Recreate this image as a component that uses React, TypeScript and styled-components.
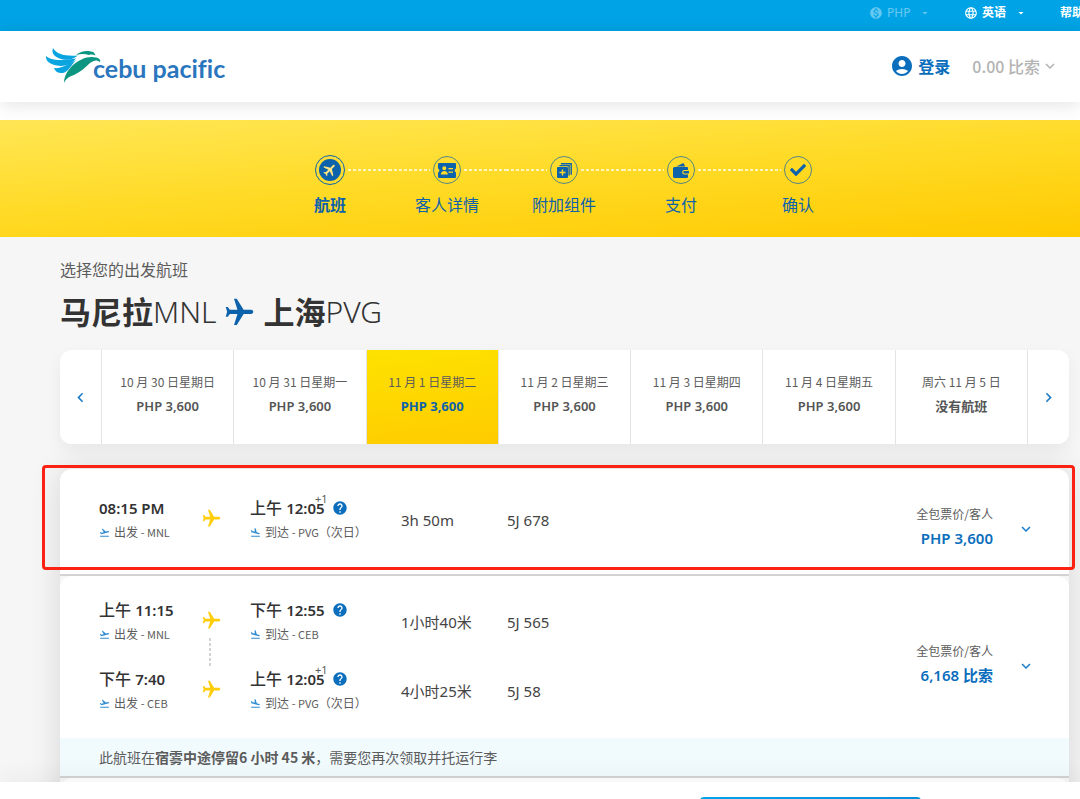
import React from 'react';
import styled, { createGlobalStyle, css } from 'styled-components';
import {
  MdAccountCircle,
  MdArrowDropDown,
  MdChevronLeft,
  MdChevronRight,
  MdExpandMore,
  MdFlight,
  MdFlightLand,
  MdFlightTakeoff,
  MdHelp,
  MdLanguage,
  MdMonetizationOn,
} from 'react-icons/md';
import { FaCheck } from 'react-icons/fa';

const color = {
  sky: '#00a4e6',
  blue: '#0a6ebd',
  deep: '#0d62ac',
  ink: '#333333',
  text: '#5c5c5c',
  gold: '#ffcd0a',
  line: '#e3e3e3',
};

const compactFont = "'Noto Sans CJK SC', 'Noto Sans', sans-serif";

const Global = createGlobalStyle`
  * { box-sizing: border-box; }
  body {
    margin: 0;
    font-family: 'Noto Sans', 'Noto Sans CJK SC', sans-serif;
    color: ${color.ink};
    background: #fff;
  }
  button, select { font: inherit; color: inherit; }
  h1, p, ol, ul { margin: 0; padding: 0; font-weight: 400; }
  li { list-style: none; }
  svg { display: block; flex: none; }
`;

const Page = styled.div`
  display: flex;
  flex-direction: column;
  height: 100vh;
  overflow: hidden;
`;

const TopBar = styled.div`
  display: flex;
  justify-content: flex-end;
  align-items: center;
  flex: none;
  height: 31px;
  padding-bottom: 5px;
  overflow: hidden;
  color: #fff;
  background: ${color.sky};
  font-size: 12px;
  line-height: 20px;
`;

const Picker = styled.label<{ $muted?: boolean }>`
  display: flex;
  align-items: center;
  gap: 4px;
  margin-right: 33px;
  opacity: ${(p) => (p.$muted ? 0.4 : 1)};
  font-weight: ${(p) => (p.$muted ? 400 : 700)};
`;

const PickerSelect = styled.select`
  appearance: none;
  border: 0;
  padding: 0;
  margin-right: 4px;
  background: transparent;
  font-size: 12px;

  option { color: ${color.ink}; }
`;

const HelpLink = styled.a`
  margin-right: -4px;
  color: inherit;
  font-weight: 700;
  text-decoration: none;
  white-space: nowrap;
`;

const Header = styled.header`
  display: flex;
  justify-content: space-between;
  align-items: center;
  flex: none;
  height: 71px;
  padding: 0 21px 2px 45px;
  background: #fff;
  box-shadow: 0 2px 18px rgba(0, 0, 0, 0.12);
`;

const Logo = styled.a`
  display: flex;
  align-items: flex-end;
  color: #2a76be;
  font-family: Lato, 'Noto Sans', sans-serif;
  font-size: 25px;
  font-variant-ligatures: none;
  font-weight: 700;
  line-height: 34px;
  text-decoration: none;

  svg { margin-right: -8px; }
`;

const Account = styled.nav`
  display: flex;
  align-items: center;
  gap: 22px;
  font-family: ${compactFont};
  font-size: 16px;
  line-height: 24px;
  font-weight: 700;
`;

const Login = styled.a`
  display: flex;
  align-items: center;
  gap: 4px;
  color: ${color.blue};
  text-decoration: none;
`;

const Balance = styled.button`
  display: flex;
  align-items: center;
  gap: 1px;
  border: 0;
  padding: 0;
  background: transparent;
  color: #b3b3b3;
  font-weight: 500;
`;

const Main = styled.main`
  flex: 1;
  min-height: 0;
  overflow: hidden;
  padding-top: 18px;
`;

const Banner = styled.section`
  padding: 35px 12px 20px 60px;
  background: linear-gradient(176deg, #ffe655 0%, #ffda25 50%, #ffca00 100%);
`;

const Steps = styled.ol`
  display: grid;
  grid-template-columns: repeat(5, 117px);
  justify-content: center;
`;

const Step = styled.li<{ $active?: boolean }>`
  display: flex;
  flex-direction: column;
  gap: 8px;
  color: ${color.deep};
  font-size: 16px;
  line-height: 24px;
  font-weight: ${(p) => (p.$active ? 700 : 400)};
  text-align: center;
`;

const Track = styled.div`
  display: flex;
  align-items: center;
  gap: 3px;
  height: 30px;
`;

const Dash = styled.span<{ $hidden?: boolean }>`
  flex: 1;
  height: 2px;
  background: repeating-linear-gradient(90deg, rgba(255, 255, 255, 0.7) 0 3px, transparent 3px 5px);
  visibility: ${(p) => (p.$hidden ? 'hidden' : 'visible')};
`;

const Badge = styled.span<{ $active?: boolean }>`
  display: flex;
  align-items: center;
  justify-content: center;
  width: 28px;
  height: 28px;
  border: 1px solid rgba(13, 98, 172, 0.7);
  border-radius: 50%;

  ${(p) =>
    p.$active &&
    css`
      width: 30px;
      height: 30px;
      border-color: ${color.deep};
      padding: 3px;
    `}
`;

const Disc = styled.span`
  display: flex;
  align-items: center;
  justify-content: center;
  width: 22px;
  height: 22px;
  border-radius: 50%;
  background: ${color.deep};
  color: #ffe680;

  svg { transform: rotate(45deg); }
`;

const PlaneRight = styled(MdFlight)`
  transform: rotate(90deg);
`;

const Content = styled.section`
  padding: 21px 11px 0 60px;
  background: #f6f6f6;
`;

const Lead = styled.p`
  color: ${color.text};
  font-size: 16px;
  line-height: 24px;
`;

const Title = styled.h1`
  display: flex;
  align-items: center;
  margin: 10px 0 18px;
  font-size: 31px;
  line-height: 40px;
  font-weight: 300;

  strong { font-weight: 700; }
  svg { margin: 0 7px; color: ${color.deep}; }
`;

const Code = styled.span`
  font-size: 30px;
`;

const StripShadow = styled.div`
  margin-bottom: 25px;
  border-radius: 12px;
  box-shadow: 0 6px 16px rgba(0, 0, 0, 0.06);
`;

const DateStrip = styled.div`
  display: grid;
  grid-template-columns: 41px repeat(7, 1fr) 42px;
  height: 94px;
  border-radius: 12px;
  overflow: hidden;
  background: #fff;
`;

const Arrow = styled.button`
  display: flex;
  align-items: center;
  justify-content: center;
  border: 0;
  padding: 0;
  background: #fff;
  color: #1a7cc9;
`;

const Day = styled.button<{ $selected?: boolean }>`
  border: 0;
  border-left: 1px solid ${color.line};
  padding: 0 0 6px;
  background: ${(p) => (p.$selected ? 'linear-gradient(172deg, #fde200, #ffcb00)' : '#fff')};
  color: ${color.text};
  font-family: ${compactFont};
  font-size: 12px;
  line-height: 24px;

  strong {
    display: block;
    color: ${(p) => (p.$selected ? color.deep : '#555')};
    font-family: 'Noto Sans', 'Noto Sans CJK SC', sans-serif;
    font-size: 13px;
    font-weight: ${(p) => (p.$selected ? 700 : 600)};
  }
`;

const NextArrow = styled(Arrow)`
  border-left: 1px solid ${color.line};
`;

const FlightList = styled.ul`
  border-radius: 12px 12px 0 0;
  box-shadow: 0 0 32px rgba(0, 0, 0, 0.13);
`;

const FlightCard = styled.li`
  position: relative;
  border-bottom: 2px solid #d3d3d3;
  border-radius: 12px 12px 0 0;
  background: #fff;
`;

const Highlight = styled.span`
  position: absolute;
  inset: -4px -6px 4px -18px;
  border: 3px solid #fb2213;
  border-radius: 4px;
  pointer-events: none;
`;

const Journey = styled.div<{ $connecting?: boolean }>`
  display: flex;
  align-items: center;
  padding: ${(p) => (p.$connecting ? '22px 38px 23px 39px' : '21px 38px 24px 39px')};
`;

const Legs = styled.div`
  flex: 1;
`;

const Leg = styled.div<{ $linked?: boolean }>`
  display: grid;
  grid-template-columns: 104px 47px 151px 106px 1fr;
  align-items: start;
  min-height: ${(p) => (p.$linked ? 69 : 48)}px;
`;

const Time = styled.p`
  display: flex;
  align-items: center;
  gap: 7px;
  font-size: 16px;
  line-height: 24px;
  font-weight: 500;
  white-space: nowrap;

  svg { color: ${color.blue}; }
`;

const Clock = styled.span`
  position: relative;
  font-size: 15px;
  font-weight: 600;
`;

const NextDay = styled.sup`
  position: absolute;
  top: -6px;
  right: -3px;
  font-size: 11px;
  line-height: 14px;
  font-weight: 400;
  color: ${color.text};
`;

const Place = styled.p`
  display: flex;
  align-items: center;
  gap: 4px;
  color: ${color.text};
  font-family: ${compactFont};
  font-size: 12px;
  line-height: 24px;
  white-space: nowrap;

  span { font-size: 11px; }
  svg { color: #2e8bd0; }
`;

const Flight = styled.div`
  display: flex;
  flex-direction: column;
  align-items: flex-start;
  align-self: stretch;
  gap: 7px;
  padding-top: 12px;
  color: ${color.gold};

  svg { margin-left: -2px; }
`;

const Layover = styled.span`
  flex: 1;
  width: 2px;
  margin-left: 6px;
  background: repeating-linear-gradient(#d3d3d3 0 3px, transparent 3px 5px);
`;

const Detail = styled.p`
  color: #444;
  font-size: 15px;
  line-height: 48px;
`;

const Fare = styled.div`
  padding-top: 12px;
  color: ${color.text};
  font-family: ${compactFont};
  font-size: 12px;
  line-height: 24px;
  text-align: right;

  strong {
    display: block;
    color: ${color.blue};
    font-family: 'Noto Sans', 'Noto Sans CJK SC', sans-serif;
    font-size: 15px;
    font-weight: 600;
  }
`;

const Toggle = styled.button`
  display: flex;
  margin: 18px -4px 0 24px;
  border: 0;
  padding: 0;
  background: transparent;
  color: #1a7cc9;
`;

const Notice = styled.p`
  padding: 7px 39px;
  background: #f1fafd;
  color: ${color.text};
  font-family: ${compactFont};
  font-size: 14px;
  line-height: 24px;
`;

const ActionBar = styled.footer`
  position: relative;
  display: flex;
  align-items: flex-start;
  justify-content: flex-end;
  flex: none;
  height: 17px;
  padding: 15px 159px 0 0;
  background: #fff;
  box-shadow: 0 -4px 24px rgba(0, 0, 0, 0.06);
`;

const Continue = styled.button`
  flex: none;
  width: 221px;
  height: 44px;
  border: 0;
  border-radius: 4px;
  background: linear-gradient(90deg, #00a4e6, #0a8fd8);
`;

function Bird() {
  return (
    <svg width="56" height="38" viewBox="0 0 56 38" aria-hidden="true">
      <path fill="#0aa4e0" d="M8 1C11 7 20 9.500 33 8.500C28 12.500 22 13.500 16 12C10 10 6 7 8 1Z" />
      <path fill="#0aa4e0" d="M1 9C6 14 18 13.500 31 11.500C27 17 20 20 12 18.500C5 17 .5 14.500 1 9Z" />
      <path fill="#0aa4e0" d="M9 21C15 22 22 18 31 13C26 18 24 24.500 18 26C13 26.500 10 24.500 9 21Z" />
      <path fill="#0c9682" d="M31 8C36 3.500 44 3 49 5.500L50.500 8.500C48 7.300 46 7.300 44 8C40 6.500 36 6.500 31 8Z" />
      <path fill="#0c9682" d="M55 15C52 12.500 49 13 45 16C41 20 36 24.500 29 28C23 30 21 32 19 36C19 30 22 24 27 19C34 12 44 8.500 51 10.500C54 11 56 13 55 15Z" />
    </svg>
  );
}

function GuestIcon() {
  return (
    <svg width="18" height="15" viewBox="0 0 18 15" aria-hidden="true">
      <path
        fill="currentColor"
        fillRule="evenodd"
        d="M1 0h16A1 1 0 0 1 18 1v4.600a2 2 0 0 0 0 3.800V14a1 1 0 0 1-1 1H1a1 1 0 0 1-1-1V9.400a2 2 0 0 0 0-3.800V1A1 1 0 0 1 1 0ZM6.300 3.200a2 2 0 1 0 0 4 2 2 0 0 0 0-4ZM2.800 11.500h7c0-2.200-1.500-3.500-3.500-3.500s-3.500 1.300-3.500 3.500ZM10.500 5v1.300h4.500V5ZM10.500 8.500v1.300h4.500V8.500Z"
      />
    </svg>
  );
}

function AddOnIcon() {
  return (
    <svg width="15" height="15" viewBox="0 0 15 15" aria-hidden="true">
      <path
        fill="currentColor"
        fillRule="evenodd"
        d="M1 4h9a1 1 0 0 1 1 1v9a1 1 0 0 1-1 1H1a1 1 0 0 1-1-1V5a1 1 0 0 1 1-1ZM4.800 6.500v2.300H2.500v1.400h2.300v2.300h1.400v-2.300h2.300V8.800H6.200V6.500Z"
      />
      <path fill="none" stroke="currentColor" strokeWidth="1.400" d="M2.500 2.600h9.600v10M4 .8h10.200v11" />
    </svg>
  );
}

function WalletIcon() {
  return (
    <svg width="16" height="15" viewBox="0 0 16 15" aria-hidden="true">
      <path fill="currentColor" d="M3 3.500 10.500 0l1.700 3.500Z" />
      <path
        fill="currentColor"
        fillRule="evenodd"
        d="M1.500 4h12.500a1 1 0 0 1 1 1v2h-3.500a2.100 2.100 0 0 0 0 4.600H15V14a1 1 0 0 1-1 1H1.500A1.500 1.500 0 0 1 0 13.500v-8A1.500 1.500 0 0 1 1.500 4Z"
      />
      <path fill="currentColor" d="M11.700 8H16v2.600h-4.300a1.300 1.300 0 0 1 0-2.600Z" />
    </svg>
  );
}

const steps = [
  { label: '航班', icon: <Disc><MdFlight size={16} /></Disc>, active: true },
  { label: '客人详情', icon: <GuestIcon /> },
  { label: '附加组件', icon: <AddOnIcon /> },
  { label: '支付', icon: <WalletIcon /> },
  { label: '确认', icon: <FaCheck size={16} /> },
];

const days = [
  { date: '10 月 30 日星期日', fare: 'PHP 3,600' },
  { date: '10 月 31 日星期一', fare: 'PHP 3,600' },
  { date: '11 月 1 日星期二', fare: 'PHP 3,600', selected: true },
  { date: '11 月 2 日星期三', fare: 'PHP 3,600' },
  { date: '11 月 3 日星期四', fare: 'PHP 3,600' },
  { date: '11 月 4 日星期五', fare: 'PHP 3,600' },
  { date: '周六 11 月 5 日', fare: '没有航班' },
];

type LegData = {
  depart: [string, string];
  from: string;
  arrive: [string, string];
  to: string;
  note?: string;
  nextDay?: boolean;
  duration: string;
  flight: string;
};

const direct: LegData[] = [
  { depart: ['', '08:15 PM'], from: 'MNL', arrive: ['上午 ', '12:05'], to: 'PVG', note: '（次日）', nextDay: true, duration: '3h 50m', flight: '5J 678' },
];

const connecting: LegData[] = [
  { depart: ['上午 ', '11:15'], from: 'MNL', arrive: ['下午 ', '12:55'], to: 'CEB', duration: '1小时40米', flight: '5J 565' },
  { depart: ['下午 ', '7:40'], from: 'CEB', arrive: ['上午 ', '12:05'], to: 'PVG', note: '（次日）', nextDay: true, duration: '4小时25米', flight: '5J 58' },
];

function JourneyRow({ legs, fare }: { legs: LegData[]; fare: string }) {
  return (
    <Journey $connecting={legs.length > 1}>
      <Legs>
        {legs.map((leg, i) => {
          const linked = i < legs.length - 1;
          return (
            <Leg key={leg.flight} $linked={linked}>
              <div>
                <Time>
                  <span>{leg.depart[0]}<Clock>{leg.depart[1]}</Clock></span>
                </Time>
                <Place>
                  <MdFlightTakeoff size={11} />
                  <div>出发 <span>- {leg.from}</span></div>
                </Place>
              </div>
              <Flight>
                <PlaneRight size={21} />
                {linked && <Layover />}
              </Flight>
              <div>
                <Time>
                  <span>
                    {leg.arrive[0]}
                    <Clock>
                      {leg.arrive[1]}
                      {leg.nextDay && <NextDay>+1</NextDay>}
                    </Clock>
                  </span>
                  <MdHelp size={16} />
                </Time>
                <Place>
                  <MdFlightLand size={11} />
                  <div>到达 <span>- {leg.to}</span>{leg.note}</div>
                </Place>
              </div>
              <Detail>{leg.duration}</Detail>
              <Detail>{leg.flight}</Detail>
            </Leg>
          );
        })}
      </Legs>
      <Fare>
        全包票价/客人
        <strong>{fare}</strong>
      </Fare>
      <Toggle aria-label="展开航班">
        <MdExpandMore size={18} />
      </Toggle>
    </Journey>
  );
}

export default function App() {
  return (
    <Page>
      <Global />
      <TopBar>
        <Picker $muted>
          <MdMonetizationOn size={14} />
          <PickerSelect aria-label="货币">
            <option>PHP</option>
          </PickerSelect>
          <MdArrowDropDown size={12} />
        </Picker>
        <Picker>
          <MdLanguage size={14} />
          <PickerSelect aria-label="语言">
            <option>英语</option>
            <option>中文</option>
          </PickerSelect>
          <MdArrowDropDown size={12} />
        </Picker>
        <HelpLink href="#help">帮助</HelpLink>
      </TopBar>
      <Header>
        <Logo href="#home">
          <Bird />
          cebu pacific
        </Logo>
        <Account>
          <Login href="#login">
            <MdAccountCircle size={24} />
            登录
          </Login>
          <Balance>
            0.00 比索
            <MdExpandMore size={18} />
          </Balance>
        </Account>
      </Header>
      <Main>
        <Banner>
          <Steps>
            {steps.map((s, i) => (
              <Step key={s.label} $active={s.active}>
                <Track>
                  <Dash $hidden={i === 0} />
                  <Badge $active={s.active}>{s.icon}</Badge>
                  <Dash $hidden={i === steps.length - 1} />
                </Track>
                {s.label}
              </Step>
            ))}
          </Steps>
        </Banner>
        <Content>
          <Lead>选择您的出发航班</Lead>
          <Title>
            <strong>马尼拉</strong>
            <Code>MNL</Code>
            <PlaneRight size={33} />
            <strong>上海</strong>
            <Code>PVG</Code>
          </Title>
          <StripShadow>
            <DateStrip>
              <Arrow aria-label="之前的日期"><MdChevronLeft size={19} /></Arrow>
              {days.map((d) => (
                <Day key={d.date} $selected={d.selected}>
                  {d.date}
                  <strong>{d.fare}</strong>
                </Day>
              ))}
              <NextArrow aria-label="之后的日期"><MdChevronRight size={19} /></NextArrow>
            </DateStrip>
          </StripShadow>
          <FlightList>
            <FlightCard>
              <JourneyRow legs={direct} fare="PHP 3,600" />
              <Highlight />
            </FlightCard>
            <FlightCard>
              <JourneyRow legs={connecting} fare="6,168 比索" />
              <Notice>
                此航班在<b>宿雾中途停留6 小时 45 米</b>，需要您再次领取并托运行李
              </Notice>
            </FlightCard>
            <FlightCard>
              <Journey />
            </FlightCard>
          </FlightList>
        </Content>
      </Main>
      <ActionBar>
        <Continue aria-label="继续" />
      </ActionBar>
    </Page>
  );
}
